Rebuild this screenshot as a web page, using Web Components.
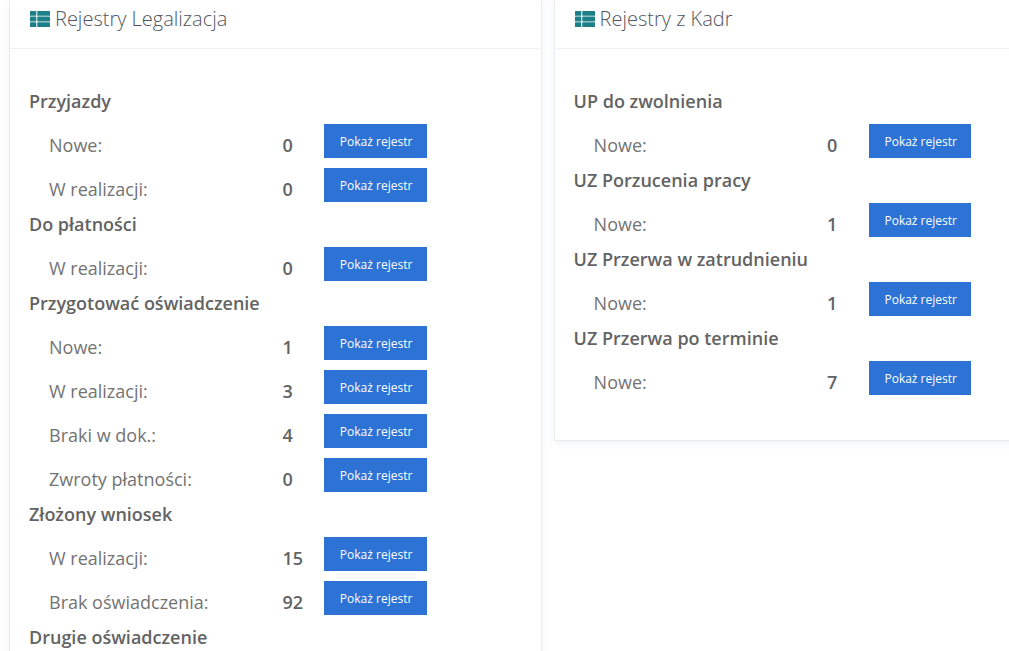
<!DOCTYPE html>
<html lang="pl">
<head>
<meta charset="utf-8">
<title>Rejestry</title>
<style>
    html, body { margin: 0; height: 651px; overflow: hidden; background: #fff; }
    body { font-family: "Open Sans", sans-serif; color: #636363; }
</style>
</head>
<body>

<template id="reg-board-template">
    <style>
        :host { display: flex; align-items: flex-start; gap: 11.6px; padding-left: 9px; width: 1000px; height: 651px; overflow: hidden; }
    </style>
    <slot></slot>
</template>

<template id="reg-card-template">
    <style>
        :host { display: block; flex: none; width: 531px; background: #fff; border: 1px solid #e9edf2; border-top: 0; box-shadow: 0 2px 8px rgba(180, 190, 205, .18); }
        header { display: flex; align-items: center; gap: 5px; height: 49px; padding: 0 20px 11px 20px; box-sizing: border-box; border-bottom: 1px solid #eef1f6; font-weight: 300; font-size: 20px; color: #4f5660; }
        svg { width: 20px; height: 18px; fill: #1d7f87; flex: none; }
        .body { padding: 30px 19px 45px; }
    </style>
    <header>
        <svg viewBox="0 0 20 18">
            <rect x="0" y="1" width="6.300" height="4.800" rx=".6"/>
            <rect x="0" y="6.600" width="6.300" height="4.800" rx=".6"/>
            <rect x="0" y="12.200" width="6.300" height="4.800" rx=".6"/>
            <rect x="7.300" y="1" width="12.700" height="4.800" rx=".6"/>
            <rect x="7.300" y="6.600" width="12.700" height="4.800" rx=".6"/>
            <rect x="7.300" y="12.200" width="12.700" height="4.800" rx=".6"/>
        </svg>
        <span id="title"></span>
    </header>
    <div class="body"><slot></slot></div>
</template>

<template id="reg-group-template">
    <style>
        :host { display: block; }
        h3 { margin: 0; padding-top: 4px; line-height: 36px; font-size: 18px; font-weight: 600; color: #636363; }
        .rows { display: flex; flex-direction: column; gap: 10px; padding-top: 5px; }
    </style>
    <h3 id="label"></h3>
    <div class="rows"><slot></slot></div>
</template>

<template id="reg-row-template">
    <style>
        :host { display: flex; align-items: flex-start; height: 34px; padding-left: 20px; font-size: 18px; line-height: 26px; color: #737373; }
        .label { width: 233.4px; flex: none; padding-top: 8px; }
        .value { width: 42px; flex: none; padding-top: 8px; font-weight: 600; color: #636363; }
        button { width: 102.4px; height: 34px; padding: 0 0 0 1px; border: 0; border-radius: 0; background: #2c73d5; color: #fff; font: 400 12px "Open Sans", sans-serif; }
    </style>
    <span class="label" id="label"></span>
    <span class="value" id="value"></span>
    <button>Pokaż rejestr</button>
</template>

<reg-board>
    <reg-card title="Rejestry Legalizacja">
        <reg-group label="Przyjazdy">
            <reg-row label="Nowe:" value="0"></reg-row>
            <reg-row label="W realizacji:" value="0"></reg-row>
        </reg-group>
        <reg-group label="Do płatności">
            <reg-row label="W realizacji:" value="0"></reg-row>
        </reg-group>
        <reg-group label="Przygotować oświadczenie">
            <reg-row label="Nowe:" value="1"></reg-row>
            <reg-row label="W realizacji:" value="3"></reg-row>
            <reg-row label="Braki w dok.:" value="4"></reg-row>
            <reg-row label="Zwroty płatności:" value="0"></reg-row>
        </reg-group>
        <reg-group label="Złożony wniosek">
            <reg-row label="W realizacji:" value="15"></reg-row>
            <reg-row label="Brak oświadczenia:" value="92"></reg-row>
        </reg-group>
        <reg-group label="Drugie oświadczenie"></reg-group>
    </reg-card>
    <reg-card title="Rejestry z Kadr">
        <reg-group label="UP do zwolnienia">
            <reg-row label="Nowe:" value="0"></reg-row>
        </reg-group>
        <reg-group label="UZ Porzucenia pracy">
            <reg-row label="Nowe:" value="1"></reg-row>
        </reg-group>
        <reg-group label="UZ Przerwa w zatrudnieniu">
            <reg-row label="Nowe:" value="1"></reg-row>
        </reg-group>
        <reg-group label="UZ Przerwa po terminie">
            <reg-row label="Nowe:" value="7"></reg-row>
        </reg-group>
    </reg-card>
</reg-board>

<script>
    function stamp(host, id) {
        var root = host.attachShadow({mode: 'open'});
        root.appendChild(document.querySelector(id).content.cloneNode(true));
        return root;
    }

    class RegBoard extends HTMLElement {
        constructor() {
            super();
            stamp(this, "#reg-board-template");
        }
    }

    class RegCard extends HTMLElement {
        constructor() {
            super();
            this.root = stamp(this, "#reg-card-template");
        }
        connectedCallback() {
            this.root.querySelector("#title").textContent = this.getAttribute("title");
        }
    }

    class RegGroup extends HTMLElement {
        constructor() {
            super();
            this.root = stamp(this, "#reg-group-template");
        }
        connectedCallback() {
            this.root.querySelector("#label").textContent = this.getAttribute("label");
        }
    }

    class RegRow extends HTMLElement {
        constructor() {
            super();
            this.root = stamp(this, "#reg-row-template");
        }
        connectedCallback() {
            this.root.querySelector("#label").textContent = this.getAttribute("label");
            this.root.querySelector("#value").textContent = this.getAttribute("value");
        }
    }

    customElements.define("reg-board", RegBoard);
    customElements.define("reg-card", RegCard);
    customElements.define("reg-group", RegGroup);
    customElements.define("reg-row", RegRow);
</script>
</body>
</html>
